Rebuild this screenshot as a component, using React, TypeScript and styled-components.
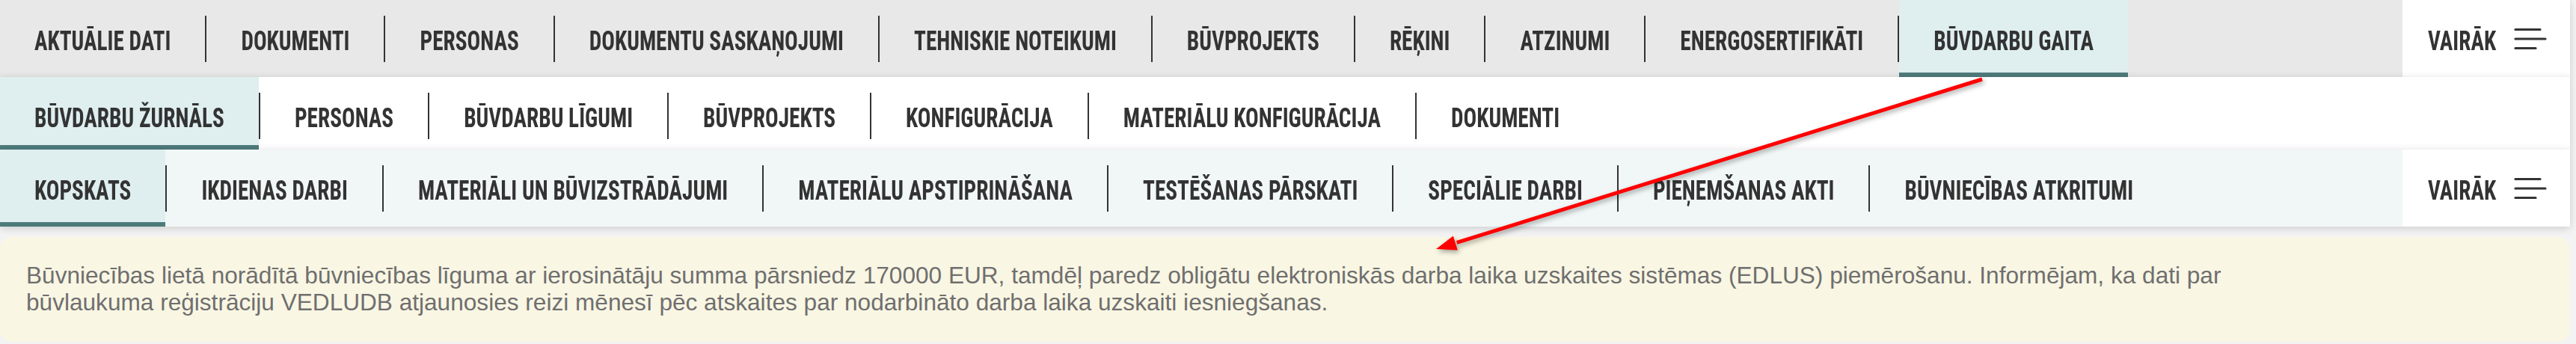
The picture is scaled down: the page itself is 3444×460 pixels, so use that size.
import React from "react";
import styled, { createGlobalStyle } from "styled-components";

const GlobalStyle = createGlobalStyle`
  body {
    margin: 0;
    background: #f3f3f3;
  }
`;

interface TabItem {
  label: string;
  active?: boolean;
}

const mainTabs: TabItem[] = [
  { label: "Aktuālie dati" },
  { label: "Dokumenti" },
  { label: "Personas" },
  { label: "Dokumentu saskaņojumi" },
  { label: "Tehniskie noteikumi" },
  { label: "Būvprojekts" },
  { label: "Rēķini" },
  { label: "Atzinumi" },
  { label: "Energosertifikāti" },
  { label: "Būvdarbu gaita", active: true },
];

const subTabs: TabItem[] = [
  { label: "Būvdarbu žurnāls", active: true },
  { label: "Personas" },
  { label: "Būvdarbu līgumi" },
  { label: "Būvprojekts" },
  { label: "Konfigurācija" },
  { label: "Materiālu konfigurācija" },
  { label: "Dokumenti" },
];

const journalTabs: TabItem[] = [
  { label: "Kopskats", active: true },
  { label: "Ikdienas darbi" },
  { label: "Materiāli un būvizstrādājumi" },
  { label: "Materiālu apstiprināšana" },
  { label: "Testēšanas pārskati" },
  { label: "Speciālie darbi" },
  { label: "Pieņemšanas akti" },
  { label: "Būvniecības atkritumi" },
];

const TabRow: React.FC<{
  tabs: TabItem[];
  bg: string;
  height: number;
  shift?: number;
  more?: boolean;
}> = ({ tabs, bg, height, shift = 0, more }) => (
  <StyledBar $bg={bg} $height={height} $shift={shift}>
    <StyledList>
      {tabs.map((tab, i) => (
        <React.Fragment key={tab.label}>
          {i > 0 && <StyledDivider />}
          <StyledTab $active={!!tab.active}>
            <StyledLabel>{tab.label}</StyledLabel>
          </StyledTab>
        </React.Fragment>
      ))}
    </StyledList>
    {more && (
      <StyledMore>
        <StyledLabel>Vairāk</StyledLabel>
        <svg width="44" height="32" viewBox="0 0 44 32">
          <g stroke="#333" strokeWidth="3.2" strokeLinecap="round">
            <line x1="2" y1="3.5" x2="35" y2="3.5" />
            <line x1="2" y1="16" x2="42" y2="16" />
            <line x1="2" y1="28.5" x2="29" y2="28.5" />
          </g>
        </svg>
      </StyledMore>
    )}
  </StyledBar>
);

const App: React.FC = () => {
  // arrow from the active main tab down to the notice
  const tip = { x: 1920, y: 333 };
  const start = { x: 2650, y: 106 };
  const len = Math.hypot(start.x - tip.x, start.y - tip.y);
  const d = { x: (start.x - tip.x) / len, y: (start.y - tip.y) / len };
  const base = { x: tip.x + d.x * 27, y: tip.y + d.y * 27 };
  const head = [
    `${tip.x},${tip.y}`,
    `${base.x + d.y * 10},${base.y - d.x * 10}`,
    `${base.x - d.y * 10},${base.y + d.x * 10}`,
  ].join(" ");

  return (
    <>
      <GlobalStyle />
      <StyledPage>
        <TabRow tabs={mainTabs} bg="#e8e8e8" height={103} more />
        <TabRow tabs={subTabs} bg="#ffffff" height={97} shift={3} />
        <TabRow tabs={journalTabs} bg="#f1f7f7" height={103} more />
        <StyledNotice>
          Būvniecības lietā norādītā būvniecības līguma ar ierosinātāju summa
          pārsniedz 170000 EUR, tamdēļ paredz obligātu elektroniskās darba
          laika uzskaites sistēmas (EDLUS) piemērošanu. Informējam, ka dati par
          <br />
          būvlaukuma reģistrāciju VEDLUDB atjaunosies reizi mēnesī pēc
          atskaites par nodarbināto darba laika uzskaiti iesniegšanas.
        </StyledNotice>
        <StyledArrow width="3444" height="460" viewBox="0 0 3444 460">
          <line
            x1={start.x}
            y1={start.y}
            x2={base.x + d.x * 2}
            y2={base.y + d.y * 2}
            stroke="#ff0000"
            strokeWidth="5"
          />
          <polygon points={head} fill="#ff0000" />
        </StyledArrow>
      </StyledPage>
    </>
  );
};

export default App;

const StyledPage = styled.div`
  position: relative;
  width: 3436px;
  padding-bottom: 3px;
`;

const StyledList = styled.div`
  flex: 1;
  display: flex;
  align-items: stretch;
`;

const StyledLabel = styled.span`
  display: inline-block;
  transform: scaleY(1.25);
`;

const StyledTab = styled.div<{ $active: boolean }>`
  display: flex;
  align-items: center;
  padding: 4px 46px 0;
  font-family: "Roboto Condensed", "Open Sans", sans-serif;
  font-weight: 700;
  font-size: 29.3px;
  text-transform: uppercase;
  white-space: nowrap;
  color: #333;
  background: ${({ $active }) => ($active ? "#dfeeee" : "transparent")};
  box-shadow: ${({ $active }) =>
    $active ? "inset 0 -6px 0 #4f7a7b" : "none"};
`;

const StyledDivider = styled.div`
  flex: none;
  align-self: center;
  width: 2px;
  height: 62px;
  background: #333;
`;

const StyledBar = styled.div<{ $bg: string; $height: number; $shift: number }>`
  position: relative;
  display: flex;
  height: ${({ $height }) => $height}px;
  background: ${({ $bg }) => $bg};
  box-shadow: 0 2px 10px rgba(0, 0, 0, 0.16);

  ${StyledTab} {
    padding-top: ${({ $shift }) => 4 + $shift * 2}px;
  }

  ${StyledDivider} {
    margin-top: ${({ $shift }) => $shift * 2}px;
  }
`;

const StyledMore = styled.div`
  flex: none;
  width: 224px;
  box-sizing: border-box;
  display: flex;
  align-items: center;
  gap: 24px;
  padding: 4px 0 0 34px;
  background: #fff;
  font-family: "Roboto Condensed", "Open Sans", sans-serif;
  font-weight: 700;
  font-size: 29.3px;
  text-transform: uppercase;
  color: #333;

  svg {
    margin-top: -4px;
  }
`;

const StyledNotice = styled.div`
  margin-top: 14px;
  padding: 33px 35px 35px;
  border-radius: 16px;
  background: #f9f6e3;
  font-family: "Liberation Sans", Arial, sans-serif;
  font-size: 31.6px;
  line-height: 36px;
  color: #6f6f6f;
  white-space: nowrap;
`;

const StyledArrow = styled.svg`
  position: absolute;
  top: 0;
  left: 0;
  pointer-events: none;
  filter: drop-shadow(2px 3px 3px rgba(0, 0, 0, 0.35));
`;
